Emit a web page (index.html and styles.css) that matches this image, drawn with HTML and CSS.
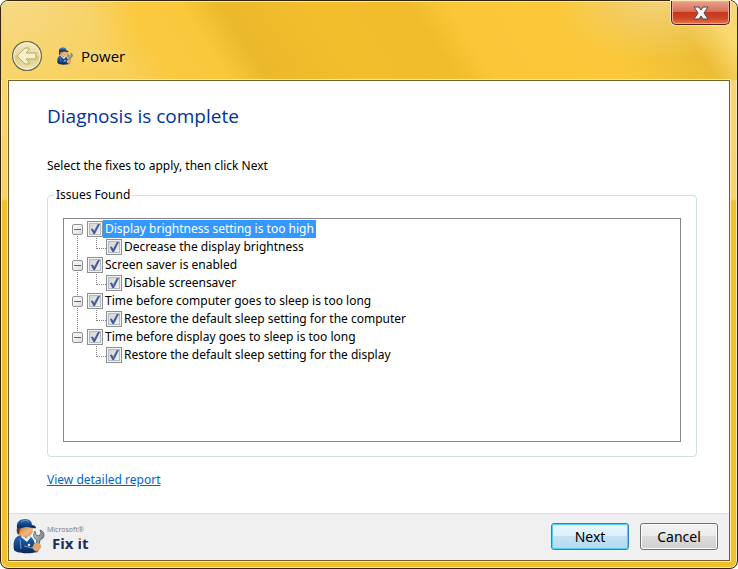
FILE: index.html
```html
<!DOCTYPE html>
<html lang="en">
<head>
<meta charset="UTF-8">
<meta name="viewport" content="width=device-width, initial-scale=1.0">
<title>Power</title>
<link rel="stylesheet" href="styles.css">
</head>
<body>
    <!-- mechanic drawing, used in the title bar and in the footer -->
    <svg class="sprite" aria-hidden="true">
        <defs>
            <linearGradient id="suit" x1="0" y1="0" x2="0" y2="1">
                <stop offset="0" stop-color="#2f6cae"/>
                <stop offset="0.5" stop-color="#174a8c"/>
                <stop offset="1" stop-color="#0a2657"/>
            </linearGradient>
            <linearGradient id="skin" x1="0" y1="0" x2="1" y2="1">
                <stop offset="0" stop-color="#b96a35"/>
                <stop offset="0.6" stop-color="#f0b67e"/>
                <stop offset="1" stop-color="#d98d4d"/>
            </linearGradient>
            <linearGradient id="steel" x1="0" y1="0" x2="1" y2="1">
                <stop offset="0" stop-color="#c3cad0"/>
                <stop offset="1" stop-color="#56606b"/>
            </linearGradient>
        </defs>
        <symbol id="mechanic" viewBox="0 0 32 36">
            <path d="M1 32C0 25 1 20 5 18L10 16L17 18C21 21 22 25 22 28L24 34C17 36 4 36 1 32Z" fill="url(#suit)"/>
            <path d="M9 17L13 20L16 17L18 19L14 24L8 19Z" fill="#e3edf6"/>
            <path d="M5 8C4 14 6 19 12 19C18 19 20 15 20 10L6 7Z" fill="url(#skin)"/>
            <path d="M4 10C3 13 4 16 6 17L7 11Z" fill="#6d3617"/>
            <path d="M4 10C3 4 7 1 12 1C17 1 19 4 19 7C21 7 23 8 23 10C20 11 17 9 14 9C10 9 6 12 4 10Z" fill="url(#suit)"/>
            <path d="M8 4C11 2 14 2 16 4" fill="none" stroke="#6ea4d4" stroke-width="1"/>
            <path d="M22 13L23 17L26 18L28 15L27 12C31 13 32 17 30 20L27 22L25 33C24 35 22 34 22 32L24 22C20 20 20 16 22 13Z" fill="url(#steel)" stroke="#414b55" stroke-width="0.7"/>
            <path d="M21 26C23 24 27 25 28 27C29 30 26 33 22 33L19 30Z" fill="#e5a568"/>
            <path d="M7 21L8 31M11 28L19 30" fill="none" stroke="#6fa0cd" stroke-width="1"/>
            <circle cx="16" cy="27" r="1.3" fill="#dce9f5"/>
        </symbol>
    </svg>

    <div class="window">
        <header class="titlebar">
            <button type="button" class="back" aria-label="Back">
                <svg viewBox="0 0 32 32" width="32" height="32">
                    <defs>
                        <linearGradient id="disc" x1="0" y1="0" x2="0" y2="1">
                            <stop offset="0" stop-color="#f6edc4"/>
                            <stop offset="0.48" stop-color="#e5d796"/>
                            <stop offset="0.52" stop-color="#dccb7c"/>
                            <stop offset="1" stop-color="#f0e6b4"/>
                        </linearGradient>
                    </defs>
                    <circle cx="16" cy="16" r="14.4" fill="url(#disc)" stroke="#6e6b55" stroke-width="1.3"/>
                    <circle cx="16" cy="16" r="13.2" fill="none" stroke="#fbf5d8"/>
                    <path d="M6 16L14 8H18V10L15 13H25V19H15L18 22V24H14Z" fill="#f7efc8" stroke="#b5a76d" stroke-linejoin="round"/>
                </svg>
            </button>
            <svg class="app-icon"><use href="#mechanic"/></svg>
            <span class="title">Power</span>
            <button type="button" class="close" aria-label="Close">
                <svg viewBox="0 0 16 14" width="16" height="14">
                    <path d="M1 1H6L8 4L10 1H15L11 7L15 13H10L8 10L6 13H1L5 7Z" fill="#f5f5f5" stroke="#55434a" stroke-width="1" stroke-linejoin="round"/>
                </svg>
            </button>
        </header>

        <form class="panel">
            <main class="content">
                <h1>Diagnosis is complete</h1>
                <p>Select the fixes to apply, then click Next</p>

                <fieldset>
                    <legend>Issues Found</legend>
                    <ul class="tree">
                        <li>
                            <div class="row">
                                <button type="button" class="toggle" aria-label="Collapse"></button>
                                <input type="checkbox" id="brightness" checked>
                                <label for="brightness" class="selected">Display brightness setting is too high</label>
                            </div>
                            <ul>
                                <li class="row">
                                    <input type="checkbox" id="brightness-fix" checked>
                                    <label for="brightness-fix">Decrease the display brightness</label>
                                </li>
                            </ul>
                        </li>
                        <li>
                            <div class="row">
                                <button type="button" class="toggle" aria-label="Collapse"></button>
                                <input type="checkbox" id="saver" checked>
                                <label for="saver">Screen saver is enabled</label>
                            </div>
                            <ul>
                                <li class="row">
                                    <input type="checkbox" id="saver-fix" checked>
                                    <label for="saver-fix">Disable screensaver</label>
                                </li>
                            </ul>
                        </li>
                        <li>
                            <div class="row">
                                <button type="button" class="toggle" aria-label="Collapse"></button>
                                <input type="checkbox" id="computer" checked>
                                <label for="computer">Time before computer goes to sleep is too long</label>
                            </div>
                            <ul>
                                <li class="row">
                                    <input type="checkbox" id="computer-fix" checked>
                                    <label for="computer-fix">Restore the default sleep setting for the computer</label>
                                </li>
                            </ul>
                        </li>
                        <li>
                            <div class="row">
                                <button type="button" class="toggle" aria-label="Collapse"></button>
                                <input type="checkbox" id="display" checked>
                                <label for="display">Time before display goes to sleep is too long</label>
                            </div>
                            <ul>
                                <li class="row">
                                    <input type="checkbox" id="display-fix" checked>
                                    <label for="display-fix">Restore the default sleep setting for the display</label>
                                </li>
                            </ul>
                        </li>
                    </ul>
                </fieldset>

                <a href="#" class="report">View detailed report</a>
            </main>

            <footer>
                <svg class="logo"><use href="#mechanic"/></svg>
                <div class="brand">
                    <span class="maker">Microsoft®</span>
                    <span class="product">Fix <span class="dotted">i</span>t</span>
                </div>
                <button type="button" class="btn primary">Next</button>
                <button type="button" class="btn">Cancel</button>
            </footer>
        </form>
    </div>
</body>
</html>
```
FILE: styles.css
```css
* {
    box-sizing: border-box;
}

body {
    margin: 0;
    background-color: #fff;
    font-family: "Noto Sans", sans-serif;
    font-size: 12px;
    line-height: 18px;
    color: #000;
}

.sprite {
    position: absolute;
    width: 0;
    height: 0;
}

button {
    padding: 0;
    font-family: "Noto Sans", sans-serif;
    cursor: pointer;
}

.window {
    display: flex;
    flex-direction: column;
    min-height: 100vh;
    padding: 0 7px 7px;
    border: 1px solid #33250c;
    border-radius: 8px;
    box-shadow: inset 0 0 0 1px #fbe9b0;
    background-color: #f2c02d;
    background-image: linear-gradient(to bottom, #f9d873 0, #f9d36a 198px, #f2c02d 200px);
}

/* title bar */
.titlebar {
    display: flex;
    align-items: center;
    height: 79px;
    margin: 0 -7px;
    padding: 30px 7px 0 10px;
    border-radius: 7px 7px 0 0;
    box-shadow: inset 0 1px 0 #fbe9b0;
    background-image:
        radial-gradient(ellipse 100px 60px at 655px 0, #f3d278, rgba(243, 210, 120, 0)),
        radial-gradient(ellipse 140px 90px at 0 0, #f5d985, rgba(245, 217, 133, 0)),
        linear-gradient(57deg, #f9d365 0, #f8d05c 16%, #fac93f 22%, #fac83b 29%, #ebb92c 34%, #f3be2c 46%, #f1bc2b 58%, #f9c738 63%, #fac83a 80%, #ecbd34 91%, #fad970 96%);
}

.back {
    width: 32px;
    height: 32px;
    margin-right: 13px;
    border: 0;
    background: none;
}

.back svg,
.close svg {
    display: block;
}

.app-icon {
    width: 18px;
    height: 18px;
    margin-right: 7px;
}

.title {
    flex: 1;
    font-family: "Open Sans", sans-serif;
    font-size: 15px;
    text-shadow: 0 0 8px #fdeeb8;
}

.close {
    display: flex;
    align-items: center;
    justify-content: center;
    align-self: flex-start;
    width: 59px;
    height: 24px;
    margin-top: -30px;
    border: 1px solid #5c1b10;
    border-top: 0;
    border-radius: 0 0 5px 5px;
    box-shadow: inset 0 0 0 1px #efaa94, 0 0 0 1px #fbe9b0;
    background-image: linear-gradient(to bottom, #e9a28e 0, #d9705a 45%, #c8371b 50%, #cd4424 75%, #e8764d 100%);
}

/* white area */
.panel {
    flex: 1;
    display: flex;
    flex-direction: column;
    border: 1px solid #77602a;
    box-shadow: 0 0 0 1px #fbe9b0;
    background-color: #fff;
}

.content {
    flex: 1;
    display: flex;
    flex-direction: column;
    align-items: flex-start;
    padding: 22px 32px 23px 38px;
}

h1 {
    margin: 0 0 28px;
    font-family: "Open Sans", sans-serif;
    font-size: 19px;
    font-weight: normal;
    line-height: 26px;
    color: #003399;
}

p {
    margin: 0 0 11px;
}

fieldset {
    align-self: stretch;
    min-width: 0;
    margin: 0 0 14px;
    padding: 14px 15px;
    border: 1px solid #d0dfe0;
    border-radius: 4px;
}

legend {
    margin-left: -9px;
    padding: 0 2px;
}

.tree {
    height: 224px;
    overflow: auto;
    border: 1px solid #828790;
    padding: 1px 8px;
}

ul {
    margin: 0;
    padding: 0;
    list-style: none;
}

.tree > li {
    background: repeating-linear-gradient(to bottom, #808080 0, #808080 1px, transparent 1px, transparent 2px) 5px 0 / 1px 100% no-repeat;
}

.tree > li:first-child {
    background-position: 5px 10px;
}

.tree > li:last-child {
    background-size: 1px 10px;
}

.tree ul {
    padding-left: 24px;
}

.row {
    display: flex;
    align-items: center;
    height: 18px;
}

/* dotted corner that leads to a child item */
.tree ul .row::before {
    content: "";
    align-self: flex-start;
    width: 9px;
    height: 10px;
    border-left: 1px dotted #808080;
    border-bottom: 1px dotted #808080;
}

.toggle {
    width: 11px;
    height: 11px;
    margin-right: 4px;
    border: 1px solid #919191;
    border-radius: 2px;
    background: linear-gradient(#4b63a7, #4b63a7) center / 7px 1px no-repeat, linear-gradient(135deg, #fff, #dcdcdc);
}

input[type="checkbox"] {
    appearance: none;
    flex: none;
    width: 16px;
    height: 16px;
    margin: 0;
    border: 1px solid #8e8f8f;
    box-shadow: inset 0 0 0 1px #f4f4f4, inset 0 0 0 2px #b4bac3;
    background-image: linear-gradient(135deg, #cbcfd5, #f6f6f6);
}

input[type="checkbox"]:checked::before {
    content: "";
    display: block;
    width: 14px;
    height: 14px;
    background-color: #4a5f97;
    clip-path: polygon(20% 50%, 34% 46%, 44% 62%, 70% 14%, 86% 14%, 50% 86%, 38% 86%);
}

label {
    padding: 0 2px;
}

.selected {
    background-color: #3399ff;
    color: #fff;
}

.report {
    color: #0066cc;
}

/* footer */
footer {
    display: flex;
    align-items: center;
    height: 47px;
    padding: 0 11px 2px 4px;
    border-top: 1px solid #dfdfdf;
    background-color: #f0f0f0;
}

.logo {
    width: 32px;
    height: 36px;
    margin-right: 2px;
}

.brand {
    flex: 1;
    padding-top: 4px;
    font-family: "Open Sans", sans-serif;
}

.maker,
.product {
    display: block;
}

.maker {
    font-size: 7px;
    line-height: 10px;
    color: #777;
}

.product {
    padding-left: 5px;
    font-size: 15px;
    font-weight: bold;
    line-height: 17px;
    color: #1b2f5c;
}

/* orange dot over the i */
.dotted {
    display: inline-block;
    background: linear-gradient(to bottom, #f26522 6px, #1b2f5c 6px);
    -webkit-background-clip: text;
    background-clip: text;
    color: transparent;
}

.btn {
    width: 78px;
    height: 27px;
    margin-left: 11px;
    border: 1px solid #707070;
    border-radius: 3px;
    box-shadow: inset 0 0 0 1px #fcfcfc;
    background-image: linear-gradient(to bottom, #f2f2f2 0, #ebebeb 50%, #dddddd 50%, #cfcfcf 100%);
    font-size: 14px;
    color: #000;
}

.primary {
    border-color: #2c87b5;
    box-shadow: inset 0 0 0 1px #4fd0f2;
    background-image: linear-gradient(to bottom, #eaf6fd 0, #dcf0fb 50%, #c3e3f4 50%, #b5d9ee 100%);
}
```
